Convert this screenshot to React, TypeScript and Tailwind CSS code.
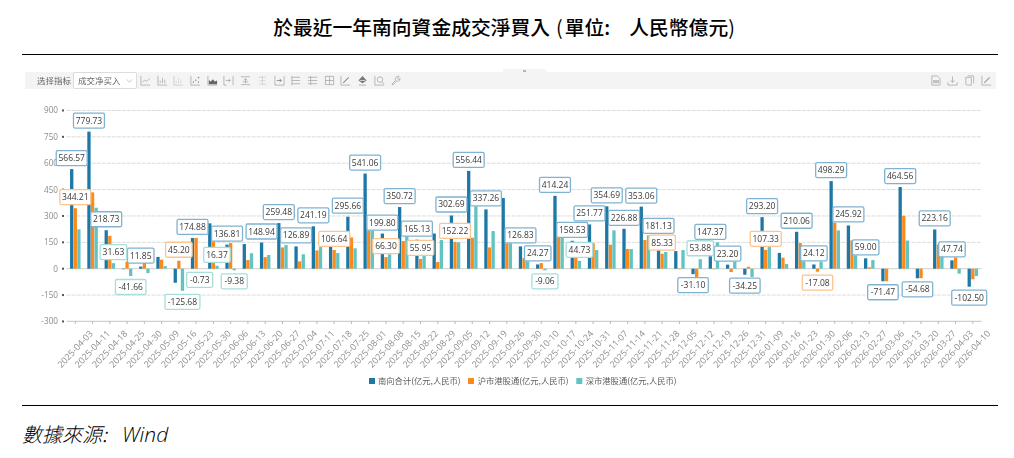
const CJK = '"Noto Sans CJK SC","Open Sans",sans-serif';

type Row = [number, number, number, number[]];
const rows: Row[] = [
  [566.57, 344.21, 224, [0, 1]], [779.73, 434, 347, [0]], [218.73, 187, 31.63, [0, 2]], [-3, 40, -41.66, [2]],
  [11.85, 35, -25, [0]], [67, 51, 15, []], [-80, 45.2, -125.68, [1, 2]], [174.88, 175, -0.73, [0, 2]],
  [258, 155, 16.37, [2]], [136.81, 146, -9.38, [0, 2]], [140, 49, 88, []], [148.94, 66, 78, [0]],
  [259.48, 121, 135, [0]], [126.89, 42, 82, [0]], [241.19, 104, 123, [0]], [125, 106.64, 89, [1]],
  [295.66, 178, 116, [0]], [541.06, 216, 216, [0]], [199.8, 66.3, 82, [0, 1]], [350.72, 157, 186, [0]],
  [165.13, 55.95, 74, [0, 1]], [200, 38, 163, []], [302.69, 152.22, 150, [0, 1]], [556.44, 176, 355, [0]],
  [337.26, 121, 214, [0]], [402, 145, 145, []], [126.83, 60, 42, [0]], [24.27, 32, -9.06, [0, 2]],
  [414.24, 178, 178, [0]], [158.53, 64, 44.73, [0, 2]], [251.77, 145, 106, [0]], [354.69, 137, 218, [0]],
  [226.88, 112, 112, [0]], [353.06, 163, 190, [0]], [181.13, 85.33, 95, [0, 1]], [100, -3, 106, []],
  [-31.1, -50, 53.88, [0, 2]], [147.37, -3, 150, [0]], [23.2, -19, 40, [0]], [-34.25, 11, -47, [0]],
  [293.2, 107.33, 123, [0, 1]], [90, 63, 27, []], [210.06, 146, 42, [0]], [24.12, -17.08, 40, [0, 1]],
  [498.29, 262, 218, [0]], [245.92, 161, 76, [0]], [59, 8, 49, [0]], [-71.47, -71, 0, [0]],
  [464.56, 301, 160, [0]], [-54.68, -54, 0, [0]], [223.16, 138, 116, [0]], [47.74, 64, -28, [0]],
  [-102.5, -60, -42, [0]],
];

const dates = [
  "2025-04-03", "2025-04-11", "2025-04-18", "2025-04-25", "2025-04-30", "2025-05-09", "2025-05-16", "2025-05-23", "2025-05-30",
  "2025-06-06", "2025-06-13", "2025-06-20", "2025-06-27", "2025-07-04", "2025-07-11", "2025-07-18", "2025-07-25", "2025-08-01",
  "2025-08-08", "2025-08-15", "2025-08-22", "2025-08-29", "2025-09-05", "2025-09-12", "2025-09-19", "2025-09-26", "2025-09-30",
  "2025-10-10", "2025-10-17", "2025-10-24", "2025-10-31", "2025-11-07", "2025-11-14", "2025-11-21", "2025-11-28", "2025-12-05",
  "2025-12-12", "2025-12-19", "2025-12-26", "2025-12-31", "2026-01-09", "2026-01-16", "2026-01-23", "2026-01-30", "2026-02-06",
  "2026-02-13", "2026-02-27", "2026-03-06", "2026-03-13", "2026-03-20", "2026-03-27", "2026-04-03", "2026-04-10",
];

const colors = ["#1e78a6", "#fb8a1c", "#62c3c1"];
const borders = ["#7fb3d0", "#fcc48e", "#a6dedb"];
const ZERO = 268.7;
const SCALE = 0.1758;
const X0 = 75.3;
const STEP = 17.26;
const yOf = (v: number) => ZERO - v * SCALE;
const xOf = (i: number) => X0 + STEP * i;
const seriesX = (i: number, s: number) => xOf(i) + (s - 1) * 3.6;

const ticks = [900, 750, 600, 450, 300, 150, 0, -150, -300];
const legend = [
  { x: 369, tx: 378, label: "南向合计(亿元,人民币)" },
  { x: 468, tx: 477.7, label: "沪市港股通(亿元,人民币)" },
  { x: 576.3, tx: 585.7, label: "深市港股通(亿元,人民币)" },
];

function labelWidth(t: string) {
  let w = 6.5;
  for (const c of t) w += c === "." ? 2.2 : c === "-" ? 4 : 4.45;
  return w;
}

function Chart() {
  return (
    <svg viewBox="22 89 976 316" className="block w-[976px] h-[316px] blur-[0.25px]">
      {ticks.filter((t) => t !== 0 && t !== -300).map((t) => (
        <line key={t} x1={66.7} x2={981.7} y1={yOf(t)} y2={yOf(t)} stroke="#dcdcdc" strokeWidth={1} strokeDasharray="4 1" />
      ))}
      <line x1={66.7} x2={981.7} y1={ZERO} y2={ZERO} stroke="#cfcfcf" strokeWidth={1} />
      <line x1={66.7} x2={981.7} y1={321.3} y2={321.3} stroke="#c4c4c4" strokeWidth={1} />
      {ticks.map((t) => (
        <g key={t}>
          <text x={58} y={yOf(t) + 3} textAnchor="end" fontSize={8.2} fill="#8c8c8c" fontFamily='"Open Sans",sans-serif'>{t}</text>
          <rect x={62} y={yOf(t) - 1} width={2} height={2} fill="#555" />
        </g>
      ))}
      {rows.map((r, i) => (
        <g key={i}>
          <line x1={xOf(i)} x2={xOf(i)} y1={321.3} y2={324} stroke="#aaa" strokeWidth={0.8} />
          {[0, 1, 2].map((s) => {
            const v = r[s] as number;
            if (v === 0) return null;
            const y = v > 0 ? yOf(v) : ZERO;
            return <rect key={s} x={seriesX(i, s) - 1.65} y={y} width={3.3} height={Math.abs(v) * SCALE} fill={colors[s]} />;
          })}
        </g>
      ))}
      {[0, 1, 2].map((s) =>
        rows.map((r, i) => {
          if (!r[3].includes(s)) return null;
          const v = r[s] as number;
          const t = v.toFixed(2);
          const w = labelWidth(t);
          const cx = seriesX(i, s);
          const cy = yOf(v) + (v < 0 ? 11 : -11);
          return (
            <g key={`${s}-${i}`}>
              <rect x={cx - w / 2} y={cy - 7.5} width={w} height={15} rx={1.5} fill="#fff" stroke={borders[s]} strokeWidth={1.3} />
              <text x={cx} y={cy + 3} textAnchor="middle" fontSize={8.5} fill="#383838" fontFamily='"Open Sans",sans-serif'>{t}</text>
            </g>
          );
        })
      )}
      {dates.map((d, i) => (
        <text key={d + i} x={xOf(i)} y={352} textAnchor="middle" fontSize={9} fill="#8f8f8f" fontFamily='"Open Sans",sans-serif' transform={`rotate(-47 ${xOf(i)} 349)`}>{d}</text>
      ))}
      {legend.map((l, i) => (
        <g key={i}>
          <rect x={l.x} y={378} width={6} height={6} fill={colors[i]} />
          <text x={l.tx} y={384} fontSize={8.3} fill="#5c5c5c" fontFamily={CJK}>{l.label}</text>
        </g>
      ))}
    </svg>
  );
}

const s = { fill: "none", stroke: "#a3a3a3", strokeWidth: 0.8 };
const Axis = () => <path d="M1 1V11H11" {...s} />;
const icons = [
  <><Axis /><path d="M2.5 8L5 5.5L7 7L10.5 4" {...s} /></>,
  <><Axis /><path d="M3.5 9V6M6 9V3M8.5 9V5" {...s} /></>,
  <><path d="M1 1V11H11" {...s} stroke="#c4c4c4" /><path d="M3.5 9V6M6 9V3M8.5 9V5" {...s} stroke="#c4c4c4" strokeDasharray="1 .6" /></>,
  <><Axis /><g fill="#8a8a8a"><rect x="3" y="7" width="1.4" height="1.4" /><rect x="5.5" y="5" width="1.4" height="1.4" /><rect x="8.5" y="2" width="1.6" height="1.6" /><rect x="8.5" y="7" width="1.4" height="1.4" /></g></>,
  <><path d="M1 1V11H11" {...s} /><path d="M2 10V5.5L4 7L6.5 4.5L8.5 7L11 6V10Z" fill="#666" /></>,
  <><path d="M1 1V11M11 1V11" {...s} /><path d="M3 6H8M6.2 4.2L8 6L6.2 7.8M1 11H4" {...s} /></>,
  <><path d="M1 2H11M1 10.5H11M6 9V4M4.2 5.8L6 4L7.8 5.8" {...s} /><path d="M3 7.5H9" {...s} /></>,
  <><path d="M6 1V11M2 2.5H10M3 6H9M2 10H10" {...s} stroke="#cdcdcd" /></>,
  <><path d="M1 1V11H11M11 1V11" {...s} /><path d="M3 6H8M6.2 4.2L8 6L6.2 7.8" {...s} stroke="#777" /></>,
  <><path d="M2 1V11M2 2.5H11M2 6H11M2 9.5H11" {...s} /></>,
  <><path d="M4 1V11M1 2.5H11M1 6H11M1 9.5H11" {...s} /></>,
  <><path d="M1.5 1.5H10.5V10.5H1.5ZM6 1.5V10.5M1.5 6H10.5" {...s} /></>,
  <><Axis /><path d="M3.5 8.5L9.5 2.5" stroke="#888" strokeWidth={1.1} fill="none" /></>,
  <><path d="M6 1L10.5 6L6 9L1.5 6Z" fill="#777" /><path d="M3 6H9" stroke="#fff" strokeWidth={0.7} /><path d="M2 11H10" stroke="#999" strokeWidth={0.8} /></>,
  <><Axis /><circle cx="6.5" cy="5" r="3" {...s} /><path d="M8.7 7.2L11 10" {...s} /></>,
  <><path d="M2 10L6 6C5 3 7 1 10 1.5L8 3.5L9 5L11 3.5C11 6.5 8.5 7.5 7 6.5L3.5 11Z" {...s} /></>,
];
const rightIcons = [
  <><path d="M2 1H8L11 4V11H2Z" {...s} /><rect x="3.2" y="5.5" width="6.6" height="3.5" fill="#c2c2c2" /></>,
  <><path d="M1 8V11H11V8" {...s} /><path d="M6 1.5V8M3.8 5.8L6 8L8.2 5.8" {...s} /></>,
  <><path d="M2 2.5H8V11H3L2 10Z" {...s} /><path d="M4 1H10.5V9" {...s} /></>,
  <><Axis /><path d="M3.5 8.5L9.5 2.5" stroke="#9a9a9a" strokeWidth={1.2} fill="none" /></>,
];

function Toolbar() {
  return (
    <div className="relative ml-[3px] w-[971px] h-[17px] bg-[#f4f4f4] flex items-center text-[#666]" style={{ fontFamily: CJK }}>
      <div className="absolute left-[477.7px] -top-[3px] w-[43px] h-[3px] bg-[#f4f4f4] rounded-t-[1px] flex justify-center items-center">
        <div className="w-[3px] h-[2px] border-y border-[#b5b5b5]" />
      </div>
      <span className="ml-[12px] w-[36px] text-[8.5px] leading-none whitespace-nowrap blur-[0.2px]">选择指标</span>
      <div className="w-[64px] h-[17px] bg-white border border-[#dcdcdc] rounded-[2px] flex items-center pl-[4px] pr-[3px] justify-between">
        <span className="text-[8.5px] leading-none whitespace-nowrap blur-[0.2px]">成交净买入</span>
        <svg viewBox="0 0 8 5" className="w-[7px] h-[4px]"><path d="M.5.5L4 4L7.5.5" fill="none" stroke="#999" strokeWidth={0.7} /></svg>
      </div>
      <div className="ml-[3px] flex gap-[5.7px]">
        {icons.map((ic, i) => (
          <svg key={i} viewBox="0 0 12 12" className="w-[11px] h-[11px]">{ic}</svg>
        ))}
      </div>
      <div className="ml-auto mr-[4.5px] flex gap-[6px]">
        {rightIcons.map((ic, i) => (
          <svg key={i} viewBox="0 0 12 12" className="w-[11px] h-[11px]">{ic}</svg>
        ))}
      </div>
    </div>
  );
}

export default function App() {
  return (
    <div className="w-[1014px] h-[458px] bg-white overflow-hidden text-black">
      <div className="ml-[22px] w-[976px]">
        <header className="h-[55px] border-b border-black flex items-center justify-center pr-[12px] text-[19.8px] font-medium whitespace-nowrap" style={{ fontFamily: '"Noto Sans CJK TC",sans-serif' }}>
          <span>於最近一年南向資金成交淨買入</span>
          <span className="ml-[6px] font-normal">(</span>
          <span className="ml-[2px]">單位:</span>
          <span className="ml-[19px]">人民幣億元</span>
          <span className="font-normal">)</span>
        </header>
        <div className="h-[351px] pt-[17px] border-b border-black">
          <Toolbar />
          <Chart />
        </div>
        <footer className="pt-[16px] text-[20px] leading-[24px] italic font-light flex" style={{ fontFamily: '"Noto Sans CJK TC",sans-serif' }}>
          <span>數據來源:</span>
          <span className="ml-[15px] text-[21px]" style={{ fontFamily: '"Open Sans",sans-serif' }}>Wind</span>
        </footer>
      </div>
    </div>
  );
}
